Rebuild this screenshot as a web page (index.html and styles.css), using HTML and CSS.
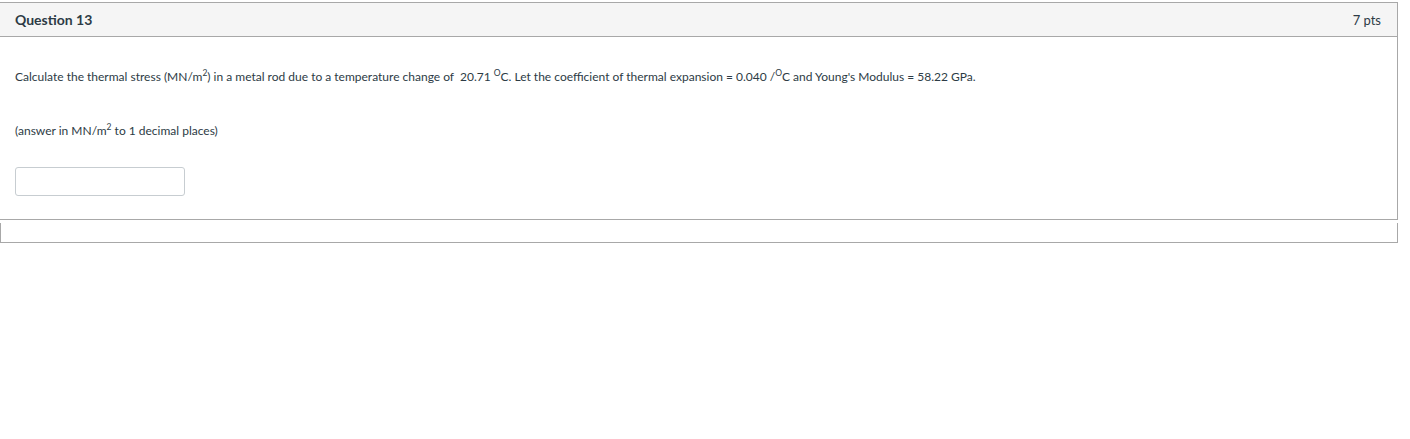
FILE: index.html
```html
<!DOCTYPE html>
<html>
<head>
<meta charset="utf-8">
<link rel="stylesheet" href="styles.css">
</head>
<body>
<div class="page">
  <div class="question">
    <div class="q-header">
      <span class="q-name">Question 13</span>
      <span class="q-pts">7 pts</span>
    </div>
    <div class="q-body">
      <p class="q-text">Calculate the thermal stress (MN/m<sup>2</sup>) in a metal rod due to a temperature change of&nbsp; 20.71 <sup class="deg">O</sup>C. Let the coefficient of thermal expansion = 0.040 /<sup class="deg">O</sup>C and Young's Modulus = 58.22 GPa.</p>
      <p class="q-note">(answer in MN/m<sup>2</sup> to 1 decimal places)</p>
      <div class="answer"><input class="answer-input" type="text"></div>
    </div>
  </div>
  <div class="next-box"></div>
</div>
</body>
</html>
```
FILE: styles.css
```css
html, body {
  margin: 0;
  padding: 0;
  background: #fff;
}
body {
  font-family: Lato, "Liberation Sans", sans-serif;
  color: #2d3b45;
}
.page {
  padding-top: 2px;
  width: 1398px;
}
.question {
  margin-left: -1px;
  border: 1px solid #a8a8a8;
  background: #fff;
}
.q-header {
  display: flex;
  justify-content: space-between;
  align-items: center;
  height: 33px;
  padding: 0 16px 0 15px;
  background: #f5f5f5;
  border-bottom: 1px solid #a8a8a8;
}
.q-name {
  font-size: 14px;
  font-weight: 700;
}
.q-pts {
  font-size: 13px;
  font-weight: 400;
}
.q-body {
  padding: 31px 15px 23px 15px;
}
.q-text, .q-note {
  margin: 0;
  font-size: 12px;
  line-height: 18px;
  color: #2d3b45;
}
.q-note {
  margin-top: 36px;
}
sup {
  font-size: 8.5px;
  line-height: 0;
  vertical-align: 5px;
}
.answer {
  margin-top: 27px;
}
.answer-input {
  display: block;
  box-sizing: border-box;
  width: 170px;
  height: 29px;
  margin: 0;
  border: 1px solid #c7cdd1;
  border-radius: 3px;
  background: #fff;
  padding: 0 6px;
}
.next-box {
  margin-top: 3px;
  height: 19px;
  border-left: 1px solid #a8a8a8;
  border-right: 1px solid #a8a8a8;
  border-bottom: 1px solid #a8a8a8;
}
```
